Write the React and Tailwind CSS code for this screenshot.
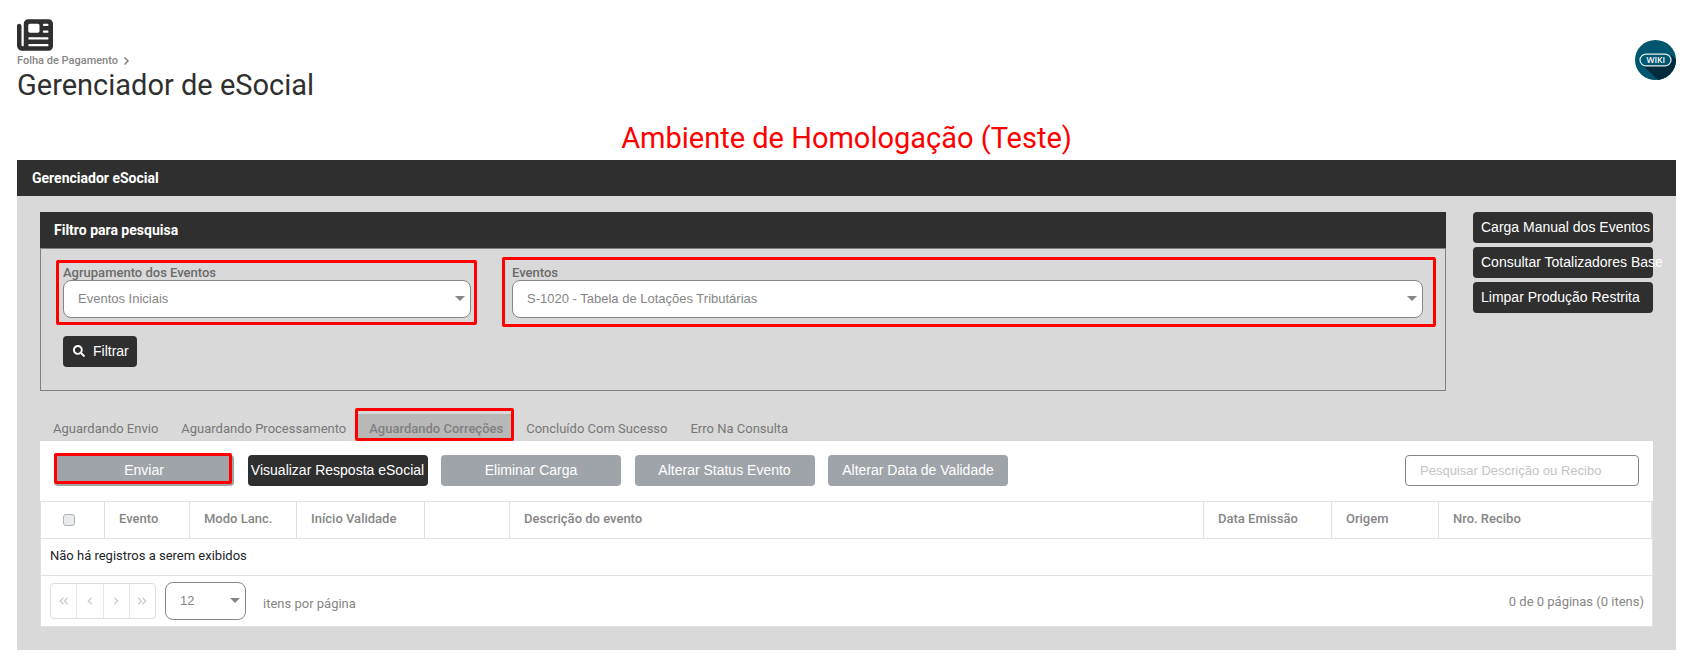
import { FaNewspaper } from "react-icons/fa6";
import { FaSearch } from "react-icons/fa";

const sideActions = ["Carga Manual dos Eventos", "Consultar Totalizadores Base", "Limpar Produção Restrita"];

const tabs = [
  { label: "Aguardando Envio" },
  { label: "Aguardando Processamento" },
  { label: "Aguardando Correções", active: true },
  { label: "Concluído Com Sucesso" },
  { label: "Erro Na Consulta" },
];

const columns = [
  { label: "Evento", width: "w-[85px]" },
  { label: "Modo Lanc.", width: "w-[107px]" },
  { label: "Início Validade", width: "w-[128px]" },
  { label: "", width: "w-[85px]" },
  { label: "Descrição do evento", width: "" },
  { label: "Data Emissão", width: "w-[128px]" },
  { label: "Origem", width: "w-[107px]" },
  { label: "Nro. Recibo", width: "w-[213px]" },
];

const arial = "font-['Liberation_Sans',Arial,sans-serif]";

function Highlight({ className }) {
  return <span aria-hidden="true" className={`pointer-events-none absolute rounded-xs border-3 border-[#ff0000] ${className}`} />;
}

function SelectBox({ id, value, label, className = "" }) {
  return (
    <div className={`relative ${className}`}>
      <select
        id={id}
        aria-label={label}
        defaultValue={value}
        className={`block h-[38px] w-full appearance-none rounded-lg border border-[#868686] bg-white pr-6 pl-3.5 text-[13px] text-[#868686] ${arial}`}
      >
        <option>{value}</option>
      </select>
      <svg viewBox="0 0 10 5" className="pointer-events-none absolute top-4 right-1.5 h-[5px] w-2.5 fill-[#868686]">
        <path d="M0 0h10L5 5z" />
      </svg>
    </div>
  );
}

function ActionButton({ children, dark, highlighted }) {
  return (
    <button
      type="button"
      className={`relative h-[31px] w-[180px] rounded-sm pb-0.5 text-sm whitespace-nowrap text-white ${arial} ${dark ? "bg-[#2f2f2f]" : "bg-[#9fa4aa]"}`}
    >
      {children}
      {highlighted && <Highlight className="-top-0.5 right-0.5 bottom-0.5 left-0" />}
    </button>
  );
}

function Chevrons({ d }) {
  return (
    <svg viewBox="0 0 10 8" className="h-2 w-2.5 fill-none stroke-[#cfcfcf] stroke-[1.5]">
      <path d={d} />
    </svg>
  );
}

const pagerButtons = [
  { label: "Primeira página", d: "M4.500 .8 1.300 4l3.200 3.200M8.700 .8 5.500 4l3.200 3.200" },
  { label: "Página anterior", d: "M6.600 .8 3.400 4l3.200 3.200" },
  { label: "Próxima página", d: "M3.400 .8 6.600 4 3.400 7.200" },
  { label: "Última página", d: "M1.300 .8 4.500 4 1.300 7.200M5.500 .8 8.700 4 5.500 7.200" },
];

function WikiBadge() {
  return (
    <svg viewBox="0 0 41 41" className="h-10 w-[41px]" preserveAspectRatio="none">
      <defs>
        <clipPath id="disc">
          <circle cx="20.500" cy="20.500" r="20.500" />
        </clipPath>
      </defs>
      <g clipPath="url(#disc)">
        <rect width="41" height="41" fill="#00566f" />
        <path d="M7 25 23 41h18V20l-5-5-3 11z" fill="#002b3d" />
      </g>
      <rect x="5" y="14.500" width="31" height="12" rx="6" fill="#00566f" stroke="#e6eef0" strokeWidth="1.200" />
      <text x="20.800" y="23.600" textAnchor="middle" fill="#fff" fontSize="8.500" fontWeight="600" fontFamily="Open Sans, sans-serif">
        WIKI
      </text>
    </svg>
  );
}

export default function App() {
  return (
    <div className="bg-white pt-[17px] pr-[18px] pb-5 pl-[17px] font-[Roboto,sans-serif] text-[13px] text-[#868686]">
      <header className="flex items-start justify-between">
        <div>
          <FaNewspaper className="size-9 text-[#2f2f2f]" />
          <nav className="flex h-4 items-center gap-1.5 text-[11px] font-medium">
            <a href="#folha">Folha de Pagamento</a>
            <svg viewBox="0 0 5 8" className="h-2 w-[5px] fill-none stroke-[#777] stroke-[1.4]">
              <path d="M.5.5 4 4 .5 7.500" />
            </svg>
          </nav>
          <h1 className="mt-0.5 text-[29px] leading-7 text-[#2f2f2f]">Gerenciador de eSocial</h1>
        </div>
        <a href="#wiki" aria-label="Wiki" className="mt-[23px]">
          <WikiBadge />
        </a>
      </header>

      <h2 className="mt-[21px] pb-[3px] text-center text-[29px] leading-[37px] text-[#ff0000]">Ambiente de Homologação (Teste)</h2>

      <main className="bg-[#d9d9d9] pb-[23px]">
        <h3 className="flex h-9 items-center bg-[#2f2f2f] px-[15px] text-sm font-bold text-white">Gerenciador eSocial</h3>

        <div className="px-[23px] pt-4">
          <div className="flex items-start gap-[27px]">
            <section className="min-w-0 flex-1">
              <h4 className="flex h-9 items-center bg-[#2f2f2f] px-3.5 text-sm font-bold text-white">Filtro para pesquisa</h4>
              <form className="border border-[#808080] px-[22px] pt-[15px] pb-[23px]" onSubmit={(e) => e.preventDefault()}>
                <div className="grid grid-cols-[408fr_911fr] gap-[41px]">
                  <div className="relative">
                    <label htmlFor="grupo" className="block h-4 leading-[18px] font-medium text-[#6b6b6b]">
                      Agrupamento dos Eventos
                    </label>
                    <SelectBox id="grupo" value="Eventos Iniciais" />
                    <Highlight className="-top-1 -right-1.5 -bottom-[7px] -left-[7px]" />
                  </div>
                  <div className="relative">
                    <label htmlFor="evento" className="block h-4 leading-[18px] font-medium text-[#6b6b6b]">
                      Eventos
                    </label>
                    <SelectBox id="evento" value="S-1020 - Tabela de Lotações Tributárias" />
                    <Highlight className="-top-[7px] -right-[13px] -bottom-[9px] -left-2.5" />
                  </div>
                </div>
                <button
                  type="submit"
                  className={`mt-[18px] flex h-[31px] items-center gap-2 rounded-sm bg-[#2f2f2f] px-2.5 pr-2 pb-0.5 text-sm text-white ${arial}`}
                >
                  <FaSearch className="size-3" />
                  Filtrar
                </button>
              </form>
            </section>

            <div className="flex w-[180px] flex-col gap-1">
              {sideActions.map((label) => (
                <button
                  key={label}
                  type="button"
                  className={`h-[31px] rounded-sm bg-[#2f2f2f] px-2 pb-0.5 text-left text-sm whitespace-nowrap text-white ${arial}`}
                >
                  {label}
                </button>
              ))}
            </div>
          </div>

          <div role="tablist" className="mt-[23px] flex h-[27px] gap-px pl-0.5">
            {tabs.map(({ label, active }) => (
              <button
                key={label}
                type="button"
                role="tab"
                aria-selected={!!active}
                className={`relative px-[11px] pt-0.5 ${active ? "bg-[#b8b8b8] font-medium text-[#808080]" : "text-[#777]"}`}
              >
                {label}
                {active && <Highlight className="-top-1.5 right-0 bottom-0 -left-[3px]" />}
              </button>
            ))}
          </div>

          <section className="bg-white">
            <div className="flex items-start justify-between p-3.5 pb-[15px]">
              <div className="flex w-[954px] justify-between">
                <ActionButton highlighted>Enviar</ActionButton>
                <ActionButton dark>Visualizar Resposta eSocial</ActionButton>
                <ActionButton>Eliminar Carga</ActionButton>
                <ActionButton>Alterar Status Evento</ActionButton>
                <ActionButton>Alterar Data de Validade</ActionButton>
              </div>
              <input
                type="text"
                aria-label="Pesquisar"
                placeholder="Pesquisar Descrição ou Recibo"
                className={`h-[31px] w-[234px] rounded-sm border border-[#868686] bg-white px-3.5 text-[13px] placeholder:text-[#c4c4c4] ${arial}`}
              />
            </div>

            <div className="border border-[#dee2e6]">
              <table className="w-full table-fixed border-separate border-spacing-0">
                <thead>
                  <tr className="h-[37px]">
                    <th className="w-16 border-r border-b border-[#dee2e6] p-0">
                      <input
                        type="checkbox"
                        aria-label="Selecionar todos"
                        className="ml-[22px] block size-3 appearance-none rounded-[3px] border border-[#adb5bd] bg-[#e9ecef]"
                      />
                    </th>
                    {columns.map(({ label, width }, i) => (
                      <th
                        key={i}
                        className={`border-r border-b border-[#dee2e6] px-3.5 pb-0.5 text-left font-medium ${width}`}
                      >
                        {label}
                      </th>
                    ))}
                  </tr>
                </thead>
                <tbody>
                  <tr className="h-[37px]">
                    <td colSpan={9} className="border-b border-[#dee2e6] px-[9px] pb-0.5 text-[#212529]">
                      Não há registros a serem exibidos
                    </td>
                  </tr>
                </tbody>
              </table>

              <footer className="flex items-center px-[9px] py-1.5 pr-2">
                <div className="flex h-9 w-[106px] divide-x divide-[#e6e6e6] rounded-sm border border-[#dedede]">
                  {pagerButtons.map(({ label, d }) => (
                    <button key={label} type="button" aria-label={label} disabled className="flex flex-1 items-center justify-center">
                      <Chevrons d={d} />
                    </button>
                  ))}
                </div>
                <SelectBox id="itens" label="Itens por página" value="12" className="ml-[9px] w-[81px]" />
                <span className="mt-1.5 ml-[17px]">itens por página</span>
                <span className="mt-0.5 ml-auto">0 de 0 páginas (0 itens)</span>
              </footer>
            </div>
          </section>
        </div>
      </main>
    </div>
  );
}
